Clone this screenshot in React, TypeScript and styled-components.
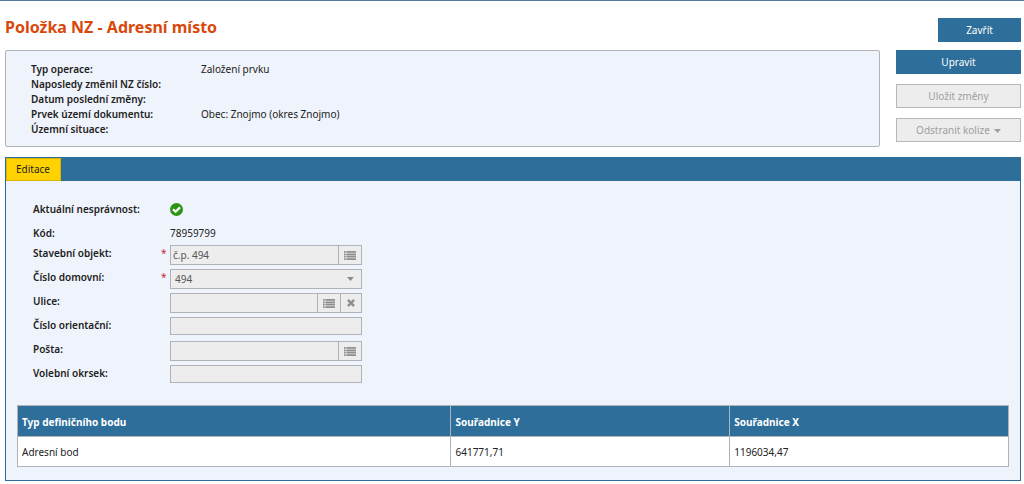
import React from "react";
import styled, { createGlobalStyle, css } from "styled-components";

const blue = "#2e6e9a";
const line = "#b0b4b8";

const GlobalStyle = createGlobalStyle`
  * { box-sizing: border-box; }
  body {
    margin: 0;
    background: #fff;
    color: #222;
    font-family: "Noto Sans", "Open Sans", sans-serif;
    font-size: 10px;
    line-height: 15px;
  }
  button, input, select { font: inherit; margin: 0; }
`;

const Page = styled.div`
  border-top: 1px solid #55799a;
  padding: 17px 3px 3px 5px;
`;

const Header = styled.header`
  display: flex;
  justify-content: space-between;
  align-items: flex-start;
`;

const Title = styled.h1`
  margin: 0;
  color: #d9480a;
  font-size: 16px;
  font-weight: 700;
  line-height: 18px;
`;

const Button = styled.button<{ $narrow?: boolean }>`
  display: flex;
  align-items: center;
  justify-content: center;
  gap: 4px;
  width: ${(p) => (p.$narrow ? "83px" : "100%")};
  height: 24px;
  padding: 1px 0 0;
  border: 1px solid ${blue};
  background: ${blue};
  color: #fff;
  &:disabled {
    border-color: #b8b8b8;
    background: #ededed;
    color: #a0a0a0;
  }
`;

const Summary = styled.section`
  display: flex;
  gap: 16px;
  margin-top: 8px;
`;

const InfoBox = styled.dl`
  flex: 1;
  display: grid;
  grid-template-columns: 170px 1fr;
  align-content: start;
  margin: 0;
  padding: 11px 25px 9px;
  border: 1px solid ${line};
  border-radius: 2px;
  background: #eff3fb;
`;

const Term = styled.dt`
  font-weight: 600;
`;

const Value = styled.dd`
  margin: 0;
`;

const Actions = styled.div`
  display: flex;
  flex-direction: column;
  gap: 10px;
  width: 125px;
`;

const Panel = styled.section`
  margin-top: 10px;
  border: 1px solid ${blue};
  background: #eff4fc;
`;

const TabBar = styled.div`
  display: flex;
  height: 23px;
  background: ${blue};
`;

const Tab = styled.button`
  padding: 0 10px 0 9px;
  border: 1px solid #d9b400;
  background: #ffd200;
  color: #222;
`;

const Form = styled.form`
  padding: 16px 27px 0;
`;

const Row = styled.div`
  display: grid;
  grid-template-columns: 128px 9px 192px;
  height: 24px;
`;

const labelStyle = css<{ $middle?: boolean }>`
  font-weight: 600;
  line-height: ${(p) => (p.$middle ? "24px" : "16px")};
`;

const Label = styled.label`
  ${labelStyle}
`;

const Caption = styled.span`
  ${labelStyle}
`;

const Star = styled.span`
  color: #c8283c;
  line-height: 16px;
`;

const Static = styled.output`
  display: flex;
  align-items: center;
`;

const Field = styled.div<{ $plain?: boolean }>`
  position: relative;
  display: flex;
  height: ${(p) => (p.$plain ? "18px" : "20px")};
  border: 1px solid ${line};
  background: #ededed;
`;

const controlStyle = css`
  flex: 1;
  min-width: 0;
  border: 0;
  border-radius: 0;
  background: transparent;
  color: #555;
  opacity: 1;
`;

const Input = styled.input`
  ${controlStyle}
  padding: 1px 2px 0;
`;

const Select = styled.select`
  ${controlStyle}
  appearance: none;
  padding: 1px 4px 0;
`;

const SelectArrow = styled.span`
  position: absolute;
  right: 7px;
  top: 0;
  bottom: 0;
  display: flex;
  align-items: center;
  color: #8c8c8c;
  pointer-events: none;
`;

const IconButton = styled.button<{ $small?: boolean }>`
  display: flex;
  align-items: center;
  justify-content: center;
  width: ${(p) => (p.$small ? "21px" : "23px")};
  padding: 0;
  border: 0;
  border-left: 1px solid ${line};
  background: transparent;
  color: #8f8f8f;
`;

const TableWrap = styled.div`
  padding: 16px 11px 13px;
`;

const Table = styled.table`
  width: 100%;
  table-layout: fixed;
  border-collapse: collapse;
  background: #fff;
`;

const Head = styled.th<{ $wide?: boolean }>`
  width: ${(p) => (p.$wide ? "43.7%" : "28.1%")};
  height: 31px;
  padding: 2px 4px 0;
  border: 1px solid ${line};
  background: ${blue};
  color: #fff;
  font-weight: 700;
  text-align: left;
`;

const Cell = styled.td`
  height: 30px;
  padding: 2px 4px 0;
  border: 1px solid ${line};
`;

const Caret = () => (
  <svg width="7" height="4" viewBox="0 0 7 4" fill="currentColor" aria-hidden="true">
    <path d="M0 0h7L3.5 4z" />
  </svg>
);

const ListIcon = () => (
  <svg width="12" height="9" viewBox="0 0 12 9" fill="currentColor" aria-hidden="true">
    <path d="M0 0h1.7v1.8H0zM0 2.4h1.7v1.8H0zM0 4.8h1.7v1.8H0zM0 7.2h1.7V9H0zM2.4 0H12v1.8H2.4zM2.4 2.4H12v1.8H2.4zM2.4 4.8H12v1.8H2.4zM2.4 7.2H12V9H2.4z" />
  </svg>
);

const CrossIcon = () => (
  <svg width="8" height="8" viewBox="0 0 8 8" stroke="currentColor" strokeWidth="2.5" aria-hidden="true">
    <path d="M.9.9l6.2 6.2M7.1.9L.9 7.1" />
  </svg>
);

const CheckIcon = () => (
  <svg width="13" height="13" viewBox="0 0 13 13" role="img" aria-label="Ano">
    <circle cx="6.5" cy="6.5" r="6.5" fill="#2c9410" />
    <path d="M3 6.2l2.6 2.6L10 4.4" fill="none" stroke="#fff" strokeWidth="2.2" />
  </svg>
);

const summary = [
  ["Typ operace:", "Založení prvku"],
  ["Naposledy změnil NZ číslo:", ""],
  ["Datum poslední změny:", ""],
  ["Prvek území dokumentu:", "Obec: Znojmo (okres Znojmo)"],
  ["Územní situace:", ""],
];

type FieldProps = {
  id: string;
  label: string;
  value?: string;
  required?: boolean;
  picker?: boolean;
  clearable?: boolean;
};

const TextRow = ({ id, label, value = "", required, picker, clearable }: FieldProps) => (
  <Row>
    <Label htmlFor={id}>{label}</Label>
    <Star>{required && "*"}</Star>
    <Field $plain={!picker}>
      <Input id={id} type="text" defaultValue={value} required={required} disabled />
      {picker && (
        <IconButton type="button" aria-label="Vybrat" disabled>
          <ListIcon />
        </IconButton>
      )}
      {clearable && (
        <IconButton type="button" aria-label="Vymazat" $small disabled>
          <CrossIcon />
        </IconButton>
      )}
    </Field>
  </Row>
);

export default function App() {
  return (
    <>
      <GlobalStyle />
      <Page>
        <Header>
          <Title>Položka NZ - Adresní místo</Title>
          <Button type="button" $narrow>Zavřít</Button>
        </Header>
        <Summary>
          <InfoBox>
            {summary.map(([term, value]) => (
              <React.Fragment key={term}>
                <Term>{term}</Term>
                <Value>{value}</Value>
              </React.Fragment>
            ))}
          </InfoBox>
          <Actions>
            <Button type="button">Upravit</Button>
            <Button type="button" disabled>Uložit změny</Button>
            <Button type="button" disabled>
              Odstranit kolize <Caret />
            </Button>
          </Actions>
        </Summary>
        <Panel>
          <TabBar>
            <Tab type="button">Editace</Tab>
          </TabBar>
          <Form>
            <Row>
              <Caption $middle>Aktuální nesprávnost:</Caption>
              <span />
              <Static><CheckIcon /></Static>
            </Row>
            <Row>
              <Caption $middle>Kód:</Caption>
              <span />
              <Static>78959799</Static>
            </Row>
            <TextRow id="building" label="Stavební objekt:" value="č.p. 494" required picker />
            <Row>
              <Label htmlFor="house">Číslo domovní:</Label>
              <Star>*</Star>
              <Field>
                <Select id="house" disabled>
                  <option>494</option>
                </Select>
                <SelectArrow><Caret /></SelectArrow>
              </Field>
            </Row>
            <TextRow id="street" label="Ulice:" picker clearable />
            <TextRow id="orientation" label="Číslo orientační:" />
            <TextRow id="post" label="Pošta:" picker />
            <TextRow id="district" label="Volební okrsek:" />
          </Form>
          <TableWrap>
            <Table>
              <thead>
                <tr>
                  <Head scope="col" $wide>Typ definičního bodu</Head>
                  <Head scope="col">Souřadnice Y</Head>
                  <Head scope="col">Souřadnice X</Head>
                </tr>
              </thead>
              <tbody>
                <tr>
                  <Cell>Adresní bod</Cell>
                  <Cell>641771,71</Cell>
                  <Cell>1196034,47</Cell>
                </tr>
              </tbody>
            </Table>
          </TableWrap>
        </Panel>
      </Page>
    </>
  );
}
